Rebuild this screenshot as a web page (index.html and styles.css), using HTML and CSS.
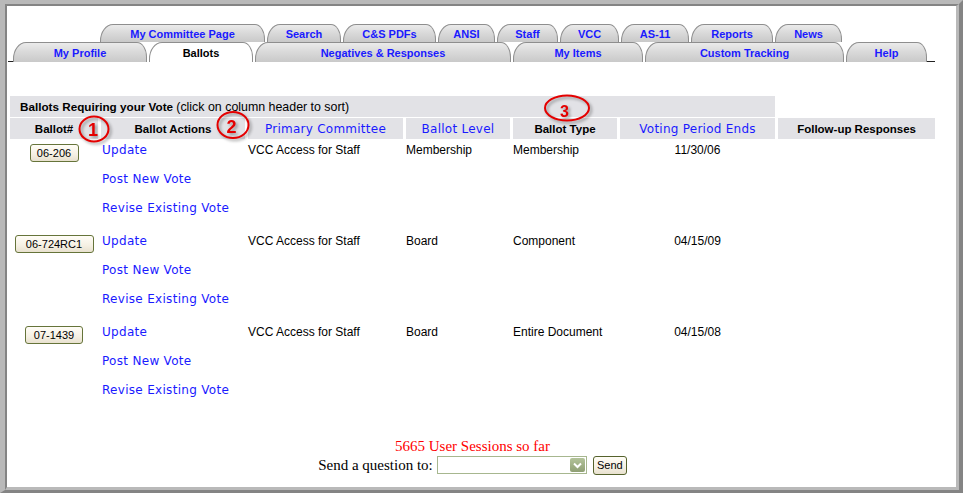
FILE: index.html
```html
<!DOCTYPE html>
<html>
<head>
<meta charset="utf-8">
<title>Ballots</title>
<link rel="stylesheet" href="styles.css">
</head>
<body>
<div class="frame">
  <div class="win">
    <div class="page">
      <nav class="tabs tabs-top">
        <a class="tab w165">My Committee Page</a>
        <a class="tab w74">Search</a>
        <a class="tab w93">C&amp;S PDFs</a>
        <a class="tab w57">ANSI</a>
        <a class="tab w61">Staff</a>
        <a class="tab w59">VCC</a>
        <a class="tab w68">AS-11</a>
        <a class="tab w82">Reports</a>
        <a class="tab w67">News</a>
      </nav>
      <nav class="tabs tabs-bottom">
        <span class="stub stub-l"></span>
        <a class="tab w134">My Profile</a>
        <a class="tab w104 active">Ballots</a>
        <a class="tab w256">Negatives &amp; Responses</a>
        <a class="tab w130">My Items</a>
        <a class="tab w199">Custom Tracking</a>
        <a class="tab w81">Help</a>
        <span class="stub stub-r"></span>
      </nav>

      <table class="ballots">
        <colgroup>
          <col class="c1"><col class="c2"><col class="c3"><col class="c4"><col class="c5"><col class="c6"><col class="c7">
        </colgroup>
        <tr>
          <td class="title" colspan="6"><b>Ballots Requiring your Vote</b> <span class="sort">(click on column header to sort)</span></td>
          <td></td>
        </tr>
        <tr class="head">
          <th>Ballot#</th>
          <th>Ballot Actions</th>
          <th><a class="sortlink">Primary Committee</a></th>
          <th><a class="sortlink">Ballot Level</a></th>
          <th>Ballot Type</th>
          <th><a class="sortlink">Voting Period Ends</a></th>
          <th>Follow-up Responses</th>
        </tr>
        <tr class="row">
          <td class="num"><button class="bal bw49">06-206</button></td>
          <td class="acts"><a>Update</a><a>Post New Vote</a><a>Revise Existing Vote</a></td>
          <td>VCC Access for Staff</td>
          <td>Membership</td>
          <td>Membership</td>
          <td class="date">11/30/06</td>
          <td></td>
        </tr>
        <tr class="row">
          <td class="num"><button class="bal bw79">06-724RC1</button></td>
          <td class="acts"><a>Update</a><a>Post New Vote</a><a>Revise Existing Vote</a></td>
          <td>VCC Access for Staff</td>
          <td>Board</td>
          <td>Component</td>
          <td class="date">04/15/09</td>
          <td></td>
        </tr>
        <tr class="row">
          <td class="num"><button class="bal bw58">07-1439</button></td>
          <td class="acts"><a>Update</a><a>Post New Vote</a><a>Revise Existing Vote</a></td>
          <td>VCC Access for Staff</td>
          <td>Board</td>
          <td>Entire Document</td>
          <td class="date">04/15/08</td>
          <td></td>
        </tr>
      </table>

      <div class="footer">
        <div class="sessions">5665 User Sessions so far</div>
        <div class="ask">
          <span>Send a question to:</span>
          <span class="select"><span class="arrow"><svg width="9" height="7" viewBox="0 0 9 7"><path d="M1 1.5 L4.5 5 L8 1.5" fill="none" stroke="#fff" stroke-width="2"/></svg></span></span>
          <button class="send">Send</button>
        </div>
      </div>

      <svg class="note n1" width="44" height="40" viewBox="0 0 44 40">
        <ellipse cx="22" cy="20" rx="14.5" ry="12.5" class="ring"/>
        <text x="21" y="21" class="digit">1</text>
      </svg>
      <svg class="note n2" width="44" height="40" viewBox="0 0 44 40">
        <ellipse cx="22" cy="20" rx="15.5" ry="13" class="ring"/>
        <text x="20.5" y="22" class="digit">2</text>
      </svg>
      <svg class="note n3" width="60" height="40" viewBox="0 0 60 40">
        <ellipse cx="30" cy="20" rx="22" ry="12.5" class="ring"/>
        <text x="27.5" y="23" class="digit small">3</text>
      </svg>
    </div>
  </div>
</div>
</body>
</html>
```
FILE: styles.css
```css
* { box-sizing: border-box; }
html, body { margin: 0; padding: 0; background: #fff; }
body { font-family: "Liberation Sans", Arial, sans-serif; color: #000; }

.frame {
  width: 963px;
  height: 493px;
  border-style: solid;
  border-width: 4px 4px 3px 5px;
  border-color: #b9b9b9 #848484 #848484 #b9b9b9;
}
.win {
  height: 100%;
  border-style: solid;
  border-width: 2px 3px 3px 2px;
  border-color: #848484 #b9b9b9 #b9b9b9 #848484;
  background: #fff;
}
.page { position: relative; width: 931px; display: flow-root; }

/* tabs */
.tabs { display: flex; align-items: flex-end; }
.tabs-top { margin: 18px 0 0 93px; height: 18px; }
.tabs-bottom { margin: 0 0 0 1px; height: 20px; }
.tab {
  display: flex;
  align-items: center;
  justify-content: center;
  height: 100%;
  border: 1px solid #8e8e8e;
  border-bottom: none;
  border-radius: 13px 10px 0 0 / 17px 15px 0 0;
  background: linear-gradient(to bottom, #ebebeb 0%, #dadada 45%, #c9c9c9 100%);
  font: bold 11px "Liberation Sans", Arial, sans-serif;
  color: #1a1aff;
  white-space: nowrap;
  padding-top: 1px;
}
.tab + .tab { margin-left: 2px; }
.tab.active { background: #fff; color: #000; }
.stub { height: 100%; border-bottom: 1px solid #222; }
.stub-l { width: 5px; }
.stub-r { width: 8px; }

.w165 { width: 165px; } .w74 { width: 74px; } .w93 { width: 93px; }
.w57 { width: 57px; } .w61 { width: 61px; } .w59 { width: 59px; }
.w68 { width: 68px; } .w82 { width: 82px; } .w67 { width: 67px; }
.w134 { width: 134px; } .w104 { width: 104px; } .w256 { width: 256px; }
.w130 { width: 130px; } .w199 { width: 199px; } .w81 { width: 81px; }

/* table */
.ballots {
  margin-top: 33px;
  width: 931px;
  table-layout: fixed;
  border-collapse: separate;
  border-spacing: 3px 1px;
  font-size: 12px;
}
.c1 { width: 88px; } .c2 { width: 144px; } .c3 { width: 155px; }
.c4 { width: 104px; } .c5 { width: 104px; } .c6 { width: 155px; } .c7 { width: 157px; }

.ballots td, .ballots th { padding: 0; }
.title {
  background: #e2e2e6;
  height: 21px;
  padding-left: 10px !important;
  font-size: 11.7px;
  white-space: nowrap;
}
.title b { font-weight: bold; }
.title .sort { font-size: 12.4px; }
.head th {
  background: #e2e2e6;
  height: 21px;
  text-align: center;
  font-weight: bold;
  font-size: 11.5px;
  white-space: nowrap;
}
.sortlink {
  font: 12px "DejaVu Sans", Verdana, sans-serif;
  letter-spacing: 0.25px;
  color: #1a1aff;
}
.row td {
  vertical-align: top;
  padding-top: 3px;
  line-height: 15px;
  white-space: nowrap;
}
.row td.num { text-align: center; padding-top: 4px; }
.row td.date { text-align: center; }
.row td.acts { padding-left: 1px; }
.acts a {
  display: block;
  font: 12px/15px "DejaVu Sans", Verdana, sans-serif;
  letter-spacing: 0.3px;
  color: #1a1aff;
  margin-bottom: 14px;
}

.bal, .send {
  height: 18px;
  padding: 0;
  border: 1px solid #66743a;
  border-radius: 3px;
  background: linear-gradient(to bottom, #fffdf7 0%, #f5f0e3 60%, #e8e1cf 100%);
  font: 11px "Liberation Sans", Arial, sans-serif;
  color: #000;
}
.bw49 { width: 49px; } .bw79 { width: 79px; } .bw58 { width: 58px; }

/* footer */
.footer { margin-top: 24px; text-align: center; }
.sessions { font: 15px "Liberation Serif", "Times New Roman", serif; color: #f00; line-height: 18px; }
.ask {
  display: flex;
  justify-content: center;
  align-items: center;
  font: 15px "Liberation Serif", "Times New Roman", serif;
  height: 20px;
}
.select {
  display: flex;
  justify-content: flex-end;
  align-items: center;
  width: 150px;
  height: 18px;
  margin-left: 4px;
  border: 1px solid #a7b78f;
  background: #fff;
  padding-right: 1px;
}
.arrow {
  display: flex;
  align-items: center;
  justify-content: center;
  width: 15px;
  height: 14px;
  border-radius: 2px;
  background: linear-gradient(to bottom, #b3c39a, #8f9f74);
}
.send { width: 34px; height: 19px; margin-left: 6px; border-color: #55622c; }

/* annotations */
.note { position: absolute; overflow: visible; filter: drop-shadow(2px 2px 1.5px rgba(0,0,0,0.35)); }
.n1 { left: 65px; top: 103px; }
.n2 { left: 203.5px; top: 99px; }
.n3 { left: 530px; top: 81.5px; }
.ring { fill: none; stroke: #e40000; stroke-width: 2; }
.digit {
  font: bold 18px "Liberation Sans", Arial, sans-serif;
  fill: #e40000;
  text-anchor: middle;
  dominant-baseline: central;
}
.digit.small { font-size: 16px; }
```
